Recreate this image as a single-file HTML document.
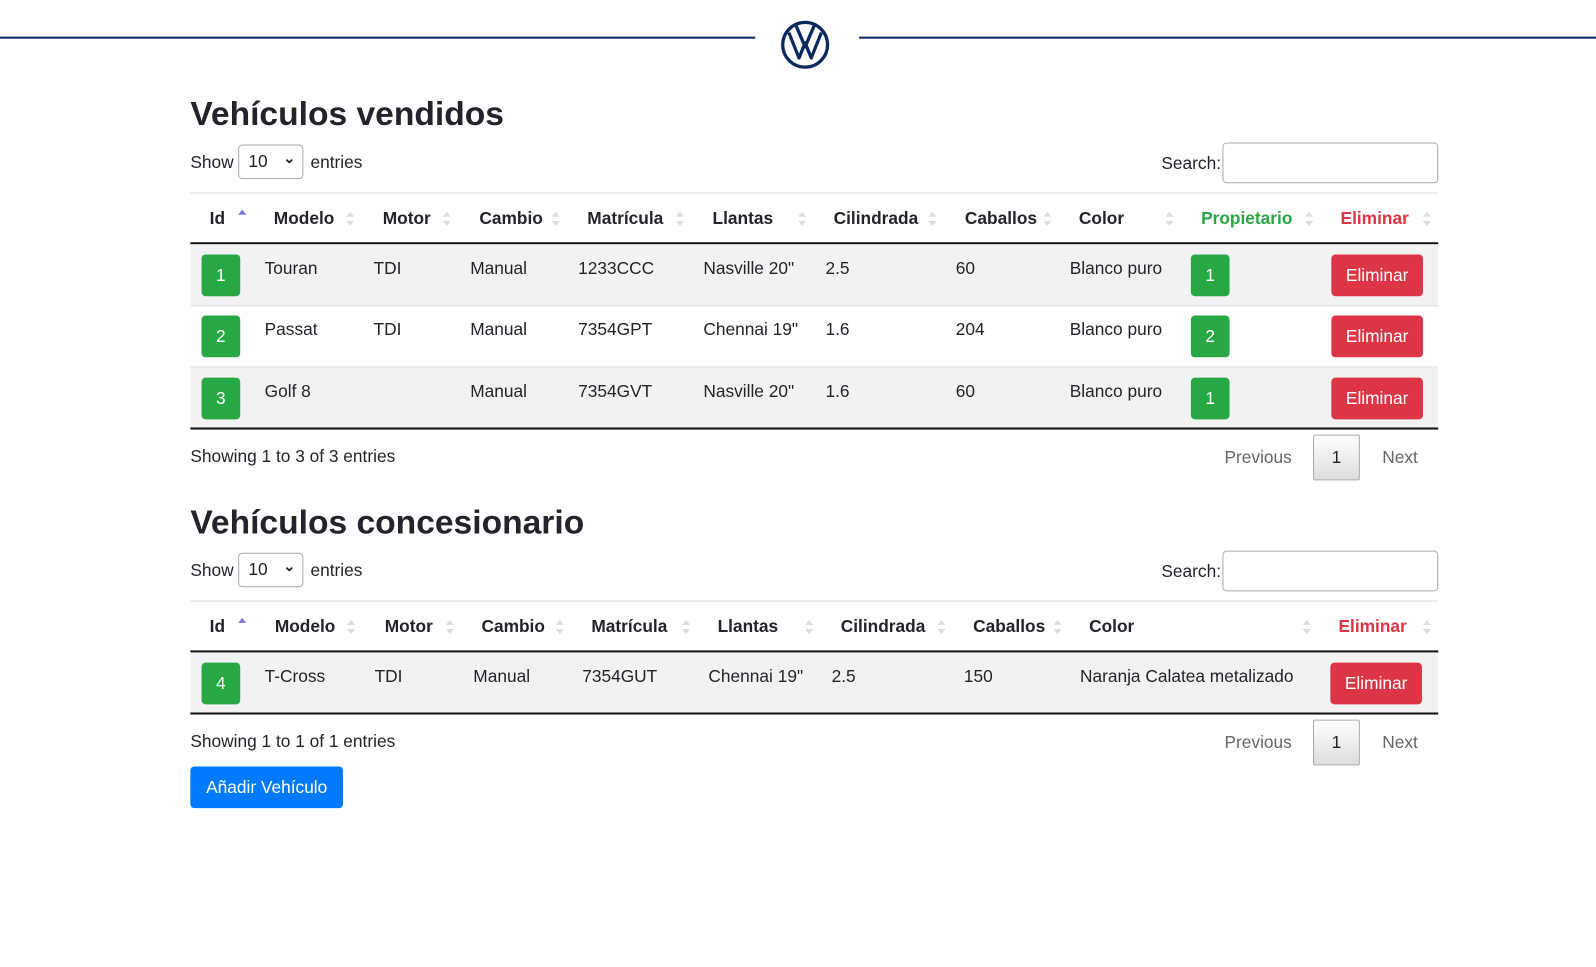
<!DOCTYPE html>
<html><head><meta charset="utf-8"><style>
body{margin:0;width:1596px;height:967px;position:relative;background:#fff;font-family:"Liberation Sans",sans-serif;color:#212529;overflow:hidden}
#w{position:absolute;left:0;top:0;width:1568px;height:950px;transform:scale(1.01786);transform-origin:0 0}
.a{position:absolute;white-space:nowrap}
.t{font-size:17px;line-height:20px}
.h{font-size:17px;font-weight:bold;line-height:20px}
h1{position:absolute;margin:0;font-size:33px;font-weight:bold;line-height:40px;left:187px}
.bd{position:absolute;width:38px;height:41px;background:#28a745;color:#fff;border-radius:4px;font-size:17px;line-height:41px;text-align:center}
.btn{position:absolute;width:90px;height:41px;background:#dc3545;color:#fff;border-radius:4px;font-size:17px;line-height:41px;text-align:center}
.ar{position:absolute;width:8px;height:14px}
.ar:before,.ar:after{content:"";position:absolute;left:0;border-left:4px solid transparent;border-right:4px solid transparent}
.ar:before{top:0;border-bottom:5px solid #ddd}
.ar:after{bottom:0;border-top:5px solid #ddd}
.ar.up:before{border-bottom-color:#7a7ad6}.ar.up:after{display:none}
.sel{position:absolute;width:64px;height:34px;border:1px solid #aaa;border-radius:4px;box-sizing:border-box;font-size:17px;line-height:32px;padding-left:9px}
.sel:after{content:"⌄";position:absolute;right:7px;top:-4px;font-weight:bold;font-size:14px}
.srch{position:absolute;width:212px;height:40px;border:1px solid #aaa;border-radius:4px;box-sizing:border-box}
.pg{position:absolute;width:46px;height:45px;border:1px solid #aaa;border-radius:2px;box-sizing:border-box;background:linear-gradient(#fff,#ddd);text-align:center;line-height:43px;font-size:17px}
.gray{color:#666}
.line{position:absolute;left:187px;width:1226px}
.row{position:absolute;left:187px;width:1226px;height:60px}
</style></head><body><div id="w">
<div class="a" style="left:0;top:36px;width:742px;height:2px;background:#0b2a6b"></div>
<div class="a" style="left:844px;top:36px;width:724px;height:2px;background:#0b2a6b"></div>
<svg class="a" style="left:766px;top:20px" width="50" height="50" viewBox="0 0 50 50">
<circle cx="25" cy="24" r="22" fill="none" stroke="#0b2a5c" stroke-width="3.2"/>
<path d="M9 12 L19 37 L25 22 L31 37 L41 12 M16 5 L25 26 L34 5" fill="none" stroke="#0b2a5c" stroke-width="3.2" stroke-linejoin="round"/>
</svg>

<h1 style="top:92px">Vehículos vendidos</h1>
<div class="a t" style="left:187px;top:150px">Show</div>
<div class="sel" style="left:234px;top:142px">10</div>
<div class="a t" style="left:305px;top:150px">entries</div>
<div class="a t" style="left:1141px;top:151px">Search:</div>
<div class="srch" style="left:1201px;top:140px"></div>

<div class="line" style="top:189px;height:1px;background:#ddd"></div>
<div class="line" style="top:238px;height:2px;background:#111"></div>
<div class="row" style="top:240px;background:#f2f2f2"></div>
<div class="line" style="top:300px;height:1px;background:#ddd"></div>
<div class="line" style="top:360px;height:1px;background:#ddd"></div>
<div class="row" style="top:361px;background:#f2f2f2"></div>
<div class="line" style="top:420px;height:2px;background:#111"></div>

<div class="a h" style="left:206px;top:205px">Id</div>
<div class="a h" style="left:269px;top:205px">Modelo</div>
<div class="a h" style="left:376px;top:205px">Motor</div>
<div class="a h" style="left:471px;top:205px">Cambio</div>
<div class="a h" style="left:577px;top:205px">Matrícula</div>
<div class="a h" style="left:700px;top:205px">Llantas</div>
<div class="a h" style="left:819px;top:205px">Cilindrada</div>
<div class="a h" style="left:948px;top:205px">Caballos</div>
<div class="a h" style="left:1060px;top:205px">Color</div>
<div class="a h" style="left:1180px;top:205px;color:#28a745">Propietario</div>
<div class="a h" style="left:1317px;top:205px;color:#dc3545">Eliminar</div>
<div class="ar up" style="left:234px;top:206px"></div>
<div class="ar" style="left:340px;top:208px"></div>
<div class="ar" style="left:435px;top:208px"></div>
<div class="ar" style="left:542px;top:208px"></div>
<div class="ar" style="left:664px;top:208px"></div>
<div class="ar" style="left:784px;top:208px"></div>
<div class="ar" style="left:912px;top:208px"></div>
<div class="ar" style="left:1025px;top:208px"></div>
<div class="ar" style="left:1145px;top:208px"></div>
<div class="ar" style="left:1282px;top:208px"></div>
<div class="ar" style="left:1398px;top:208px"></div>

<div class="bd" style="left:198px;top:250px">1</div>
<div class="a t" style="left:260px;top:254px">Touran</div><div class="a t" style="left:367px;top:254px">TDI</div><div class="a t" style="left:462px;top:254px">Manual</div><div class="a t" style="left:568px;top:254px">1233CCC</div><div class="a t" style="left:691px;top:254px">Nasville 20"</div><div class="a t" style="left:811px;top:254px">2.5</div><div class="a t" style="left:939px;top:254px">60</div><div class="a t" style="left:1051px;top:254px">Blanco puro</div>
<div class="bd" style="left:1170px;top:250px">1</div><div class="btn" style="left:1308px;top:250px">Eliminar</div>

<div class="bd" style="left:198px;top:310px">2</div>
<div class="a t" style="left:260px;top:314px">Passat</div><div class="a t" style="left:367px;top:314px">TDI</div><div class="a t" style="left:462px;top:314px">Manual</div><div class="a t" style="left:568px;top:314px">7354GPT</div><div class="a t" style="left:691px;top:314px">Chennai 19"</div><div class="a t" style="left:811px;top:314px">1.6</div><div class="a t" style="left:939px;top:314px">204</div><div class="a t" style="left:1051px;top:314px">Blanco puro</div>
<div class="bd" style="left:1170px;top:310px">2</div><div class="btn" style="left:1308px;top:310px">Eliminar</div>

<div class="bd" style="left:198px;top:371px">3</div>
<div class="a t" style="left:260px;top:375px">Golf 8</div><div class="a t" style="left:462px;top:375px">Manual</div><div class="a t" style="left:568px;top:375px">7354GVT</div><div class="a t" style="left:691px;top:375px">Nasville 20"</div><div class="a t" style="left:811px;top:375px">1.6</div><div class="a t" style="left:939px;top:375px">60</div><div class="a t" style="left:1051px;top:375px">Blanco puro</div>
<div class="bd" style="left:1170px;top:371px">1</div><div class="btn" style="left:1308px;top:371px">Eliminar</div>

<div class="a t" style="left:187px;top:439px">Showing 1 to 3 of 3 entries</div>
<div class="a t gray" style="left:1203px;top:440px">Previous</div>
<div class="pg" style="left:1290px;top:427px">1</div>
<div class="a t gray" style="left:1358px;top:440px">Next</div>

<h1 style="top:493px">Vehículos concesionario</h1>
<div class="a t" style="left:187px;top:551px">Show</div>
<div class="sel" style="left:234px;top:543px">10</div>
<div class="a t" style="left:305px;top:551px">entries</div>
<div class="a t" style="left:1141px;top:552px">Search:</div>
<div class="srch" style="left:1201px;top:541px"></div>

<div class="line" style="top:590px;height:1px;background:#ddd"></div>
<div class="line" style="top:639px;height:2px;background:#111"></div>
<div class="row" style="top:641px;background:#f2f2f2"></div>
<div class="line" style="top:700px;height:2px;background:#111"></div>

<div class="a h" style="left:206px;top:606px">Id</div>
<div class="a h" style="left:270px;top:606px">Modelo</div>
<div class="a h" style="left:378px;top:606px">Motor</div>
<div class="a h" style="left:473px;top:606px">Cambio</div>
<div class="a h" style="left:581px;top:606px">Matrícula</div>
<div class="a h" style="left:705px;top:606px">Llantas</div>
<div class="a h" style="left:826px;top:606px">Cilindrada</div>
<div class="a h" style="left:956px;top:606px">Caballos</div>
<div class="a h" style="left:1070px;top:606px">Color</div>
<div class="a h" style="left:1315px;top:606px;color:#dc3545">Eliminar</div>
<div class="ar up" style="left:234px;top:607px"></div>
<div class="ar" style="left:341px;top:609px"></div>
<div class="ar" style="left:438px;top:609px"></div>
<div class="ar" style="left:546px;top:609px"></div>
<div class="ar" style="left:670px;top:609px"></div>
<div class="ar" style="left:791px;top:609px"></div>
<div class="ar" style="left:921px;top:609px"></div>
<div class="ar" style="left:1035px;top:609px"></div>
<div class="ar" style="left:1280px;top:609px"></div>
<div class="ar" style="left:1398px;top:609px"></div>

<div class="bd" style="left:198px;top:651px">4</div>
<div class="a t" style="left:260px;top:655px">T-Cross</div><div class="a t" style="left:368px;top:655px">TDI</div><div class="a t" style="left:465px;top:655px">Manual</div><div class="a t" style="left:572px;top:655px">7354GUT</div><div class="a t" style="left:696px;top:655px">Chennai 19"</div><div class="a t" style="left:817px;top:655px">2.5</div><div class="a t" style="left:947px;top:655px">150</div><div class="a t" style="left:1061px;top:655px">Naranja Calatea metalizado</div>
<div class="btn" style="left:1307px;top:651px">Eliminar</div>

<div class="a t" style="left:187px;top:719px">Showing 1 to 1 of 1 entries</div>
<div class="a t gray" style="left:1203px;top:720px">Previous</div>
<div class="pg" style="left:1290px;top:707px">1</div>
<div class="a t gray" style="left:1358px;top:720px">Next</div>

<div class="a" style="left:187px;top:753px;width:150px;height:41px;background:#007bff;color:#fff;border-radius:4px;font-size:17px;line-height:41px;text-align:center">Añadir Vehículo</div>
</div></body></html>
